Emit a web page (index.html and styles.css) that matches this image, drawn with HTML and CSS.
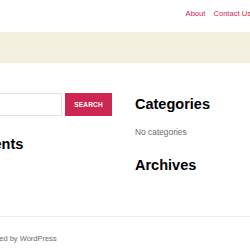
FILE: index.html
```html
<!DOCTYPE html>
<html lang="en">
<head>
    <meta charset="UTF-8" />
    <meta name="viewport" content="width=device-width, initial-scale=1.0" />
    <title>Footer widgets</title>
    <link rel="stylesheet" href="styles.css">
</head>
<body>
    <header class="site-header">
        <nav class="primary-menu">
            <a href="#">About</a>
            <a href="#">Contact Us</a>
        </nav>
    </header>

    <div class="cover-band"></div>

    <div class="widgets">
        <div class="widget-column left">
            <form class="search-form">
                <input type="search" class="search-field" />
                <button type="button" class="search-submit">Search</button>
            </form>
            <h2 class="widget-title">Recent Comments</h2>
        </div>
        <div class="widget-column right">
            <h2 class="widget-title">Categories</h2>
            <p class="widget-empty">No categories</p>
            <h2 class="widget-title">Archives</h2>
        </div>
    </div>

    <footer class="site-footer">
        <p class="powered-by">Powered by WordPress</p>
    </footer>
</body>
</html>
```

FILE: styles.css
```css
* {
    margin: 0;
    padding: 0;
    box-sizing: border-box;
}

body {
    width: 250px;
    overflow: hidden;
    background: #ffffff;
    color: #000000;
    font-family: "Liberation Sans", Arial, sans-serif;
}

.site-header {
    height: 32px;
    padding-top: 9px;
    display: flex;
    justify-content: flex-end;
    align-items: flex-start;
}

.primary-menu {
    display: flex;
    gap: 8px;
    margin-right: -1px;
    white-space: nowrap;
}

.primary-menu a {
    color: #cd2653;
    font-size: 7.6px;
    font-weight: 500;
    text-decoration: none;
}

.cover-band {
    height: 31px;
    background: #f5efe0;
}

.widgets {
    display: flex;
    gap: 23px;
    margin-left: -104px;
    padding-top: 30px;
    height: 154px;
    border-bottom: 1px solid #f0ede3;
}

.widget-column.left {
    width: 216px;
    flex-shrink: 0;
}

.search-form {
    display: flex;
    gap: 3px;
}

.search-field {
    flex: 1;
    min-width: 0;
    height: 23px;
    border: 1px solid #e6e2d8;
    background: #ffffff;
}

.search-submit {
    flex-shrink: 0;
    width: 47px;
    height: 23px;
    border: none;
    background: #cd2653;
    color: #ffffff;
    font-family: "Liberation Sans", Arial, sans-serif;
    font-size: 6.5px;
    font-weight: 700;
    letter-spacing: 0.2px;
    text-transform: uppercase;
}

.widget-title {
    font-size: 14.5px;
    font-weight: 700;
    line-height: 1.2;
}

.left .widget-title {
    margin-top: 20px;
}

.right .widget-title {
    margin-top: 3px;
}

.widget-empty {
    margin: 14px 0 20px;
    color: #6d6d6d;
    font-size: 8.4px;
}

.right .widget-empty + .widget-title {
    margin-top: 0;
}

.site-footer {
    padding-top: 17px;
}

.powered-by {
    margin-left: -22px;
    color: #6d6d6d;
    font-size: 7.5px;
}
```
